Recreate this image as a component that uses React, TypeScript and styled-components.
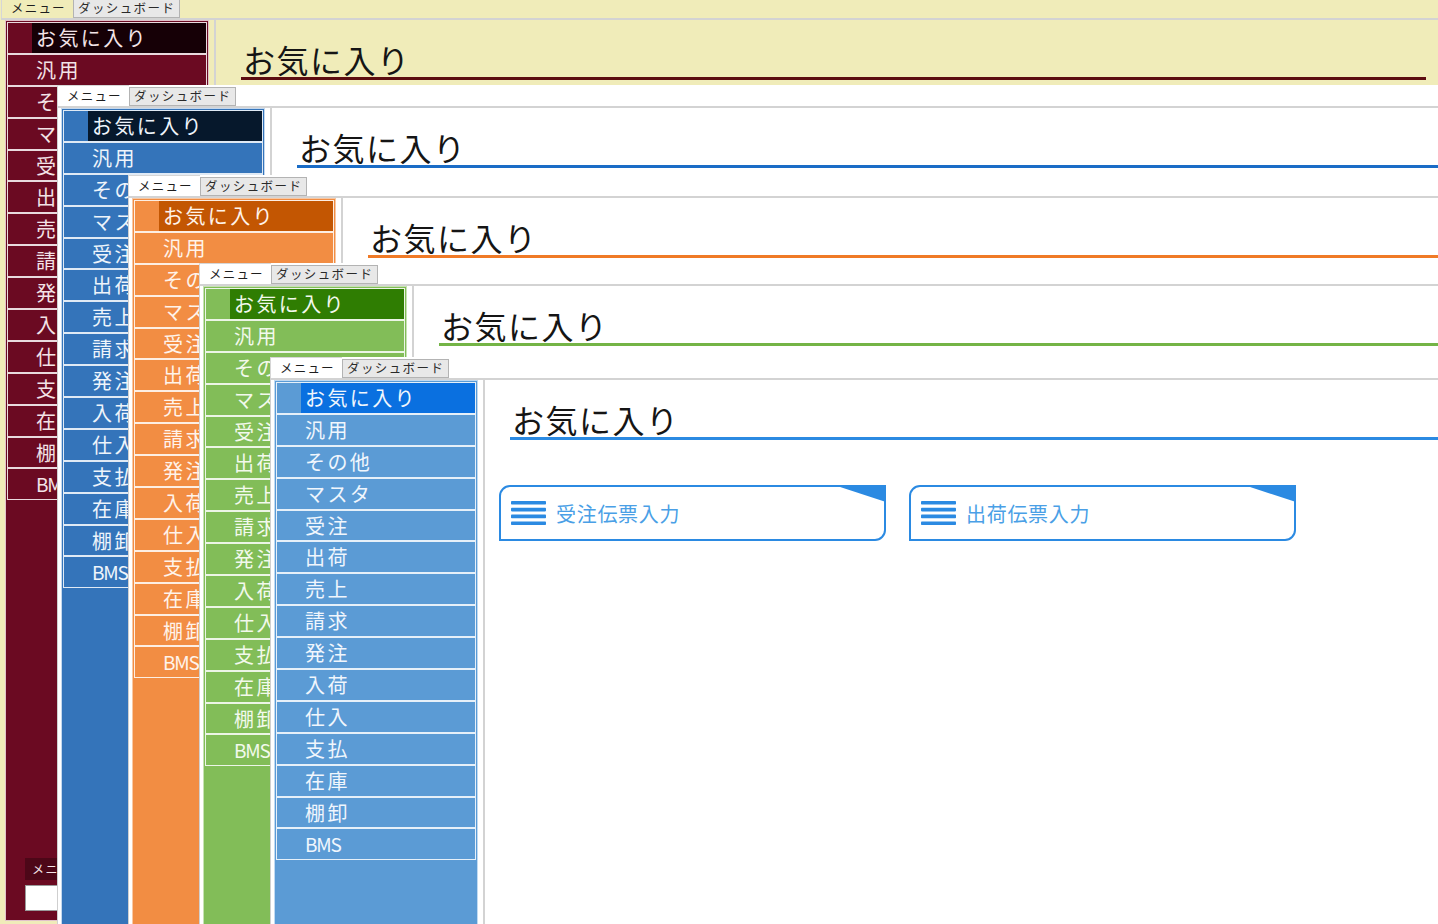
import React from 'react';
import styled, { createGlobalStyle } from 'styled-components';

const GlobalStyle = createGlobalStyle`
  html, body {
    margin: 0;
    padding: 0;
    width: 1438px;
    height: 924px;
    overflow: hidden;
    background: #f0ecb9;
  }
  body {
    font-family: "Noto Sans CJK JP", "Noto Sans", sans-serif;
  }
  * { box-sizing: border-box; }
`;

type Theme = {
  x: number;
  y: number;
  bg: string;
  sidebar: string;
  highlight: string;
  line: string;
  itemText: string;
  frame: string;
  edge: boolean;
};

const themes: Theme[] = [
  { x: 2, y: -3, bg: '#f0ecb9', sidebar: '#6b0a22', highlight: '#160006', line: '#5c0d10', itemText: '#f3e3e7', frame: '#e2c2ca', edge: false },
  { x: 57, y: 85, bg: '#ffffff', sidebar: '#3474ba', highlight: '#06182c', line: '#1a6cc6', itemText: '#eef4fb', frame: '#c4d8ee', edge: true },
  { x: 128, y: 175, bg: '#ffffff', sidebar: '#f28d43', highlight: '#c35602', line: '#f07a26', itemText: '#fff3ea', frame: '#f8c8a4', edge: true },
  { x: 199, y: 263, bg: '#ffffff', sidebar: '#82bd58', highlight: '#2f7d02', line: '#74b446', itemText: '#f2f9ec', frame: '#c6e2b2', edge: true },
  { x: 270, y: 357, bg: '#ffffff', sidebar: '#5b9bd5', highlight: '#0a70e0', line: '#2b8ae2', itemText: '#f0f6fd', frame: '#c0daf2', edge: true },
];

const menuItems = ['お気に入り', '汎用', 'その他', 'マスタ', '受注', '出荷', '売上', '請求', '発注', '入荷', '仕入', '支払', '在庫', '棚卸', 'BMS'];
const cards = ['受注伝票入力', '出荷伝票入力'];

const Desktop = styled.div`
  position: relative;
  width: 1438px;
  height: 924px;
  overflow: hidden;
  background: #f0ecb9;
`;

const Win = styled.div<{ $x: number; $y: number; $bg: string; $edge: boolean }>`
  position: absolute;
  left: ${(p) => p.$x}px;
  top: ${(p) => p.$y}px;
  width: 1438px;
  height: 928px;
  background: ${(p) => p.$bg};
  border-left: ${(p) => (p.$edge ? '1px solid #cfcfcf' : '0')};
  display: flex;
  flex-direction: column;
`;

const TabBar = styled.div`
  height: 23px;
  flex-shrink: 0;
  display: flex;
  align-items: flex-end;
  border-bottom: 2px solid #d3d3d3;
  margin-left: -1px;
`;

const ActiveTab = styled.div`
  width: 72px;
  height: 21px;
  padding-left: 9px;
  border-top: 1px solid #d6d6d6;
  border-left: 1px solid #d6d6d6;
  font-size: 12.5px;
  line-height: 19px;
  letter-spacing: 1.2px;
  color: #1e1e1e;
  white-space: nowrap;
`;

const Tab = styled.div`
  width: 107px;
  height: 19px;
  padding-left: 4px;
  border: 1px solid #b3b3b3;
  background: #e8e8e8;
  font-size: 12.5px;
  line-height: 16px;
  letter-spacing: 1.4px;
  color: #2a2a2a;
  white-space: nowrap;
`;

const Body = styled.div`
  flex: 1;
  display: flex;
  min-height: 0;
`;

const Sidebar = styled.div<{ $bg: string; $frame: string }>`
  width: 204px;
  margin: 0 0 4px 3px;
  border: 1px solid ${(p) => p.$frame};
  padding: 1px;
  background: ${(p) => p.$bg};
  display: flex;
  flex-direction: column;
`;

const Item = styled.div`
  height: 31.9px;
  flex-shrink: 0;
  border: 1px solid rgba(255, 255, 255, 0.85);
  display: flex;
`;

const Indent = styled.div`
  width: 24px;
  flex-shrink: 0;
`;

const ItemLabel = styled.div<{ $active: boolean; $hl: string; $color: string; $latin: boolean }>`
  flex: 1;
  padding-left: 4px;
  background: ${(p) => (p.$active ? p.$hl : 'transparent')};
  color: ${(p) => p.$color};
  font-size: ${(p) => (p.$latin ? '19px' : '20px')};
  letter-spacing: ${(p) => (p.$latin ? '-1.2px' : '2.4px')};
  line-height: 29px;
  white-space: nowrap;
  overflow: hidden;
`;

const Footer = styled.div`
  margin-top: auto;
  padding: 0 0 8px 18px;
  display: flex;
  flex-direction: column;
  align-items: flex-start;
`;

const FooterLabel = styled.div<{ $color: string }>`
  height: 22px;
  padding: 0 7px;
  background: rgba(0, 0, 0, 0.28);
  color: ${(p) => p.$color};
  font-size: 12px;
  line-height: 22px;
  letter-spacing: 1.4px;
  white-space: nowrap;
`;

const FooterInput = styled.div`
  margin-top: 5px;
  width: 160px;
  height: 26px;
  background: #ffffff;
  border: 1px solid #9a9a9a;
`;

const Divider = styled.div`
  width: 2px;
  flex-shrink: 0;
  margin-left: 5px;
  background: #d3d3d3;
`;

const Content = styled.div`
  flex: 1;
  min-width: 0;
  display: flex;
  flex-direction: column;
`;

const Title = styled.div<{ $line: string }>`
  margin: 23px 14px 0 25px;
  padding: 0 0 2px 2px;
  border-bottom: 3px solid ${(p) => p.$line};
  font-size: 32px;
  line-height: 32px;
  letter-spacing: 1.5px;
  color: #151515;
  white-space: nowrap;
`;

const CardRow = styled.div`
  display: flex;
  gap: 23px;
  margin: 45px 0 0 14px;
`;

const Card = styled.div<{ $color: string }>`
  position: relative;
  width: 387px;
  height: 56px;
  border: 2px solid ${(p) => p.$color};
  border-radius: 11px 0 11px 0;
  display: flex;
  align-items: center;
  padding-left: 10px;
  background: #ffffff;
`;

const Corner = styled.div<{ $color: string }>`
  position: absolute;
  top: -2px;
  right: -2px;
  width: 52px;
  height: 17px;
  background: ${(p) => p.$color};
  clip-path: polygon(0 0, 100% 0, 100% 100%);
`;

const CardText = styled.span`
  margin-left: 10px;
  font-size: 20px;
  letter-spacing: 0.7px;
  color: #4a9fe6;
  white-space: nowrap;
`;

const MenuIcon = ({ color }: { color: string }) => (
  <svg width="35" height="24" viewBox="0 0 35 24">
    {[0, 6.8, 13.6, 20.4].map((y) => (
      <rect key={y} x="0" y={y} width="35" height="3.6" rx="0.8" fill={color} />
    ))}
  </svg>
);

const AppWindow = ({ t }: { t: Theme }) => (
  <Win $x={t.x} $y={t.y} $bg={t.bg} $edge={t.edge}>
    <TabBar>
      <ActiveTab>メニュー</ActiveTab>
      <Tab>ダッシュボード</Tab>
    </TabBar>
    <Body>
      <Sidebar $bg={t.sidebar} $frame={t.frame}>
        {menuItems.map((m, i) => (
          <Item key={m}>
            <Indent />
            <ItemLabel $active={i === 0} $hl={t.highlight} $color={t.itemText} $latin={m === 'BMS'}>
              {m}
            </ItemLabel>
          </Item>
        ))}
        <Footer>
          <FooterLabel $color={t.itemText}>メニュー検索</FooterLabel>
          <FooterInput />
        </Footer>
      </Sidebar>
      <Divider />
      <Content>
        <Title $line={t.line}>お気に入り</Title>
        <CardRow>
          {cards.map((c) => (
            <Card key={c} $color={t.line}>
              <Corner $color={t.line} />
              <MenuIcon color={t.line} />
              <CardText>{c}</CardText>
            </Card>
          ))}
        </CardRow>
      </Content>
    </Body>
  </Win>
);

export default function App() {
  return (
    <>
      <GlobalStyle />
      <Desktop>
        {themes.map((t, i) => (
          <AppWindow key={i} t={t} />
        ))}
      </Desktop>
    </>
  );
}
